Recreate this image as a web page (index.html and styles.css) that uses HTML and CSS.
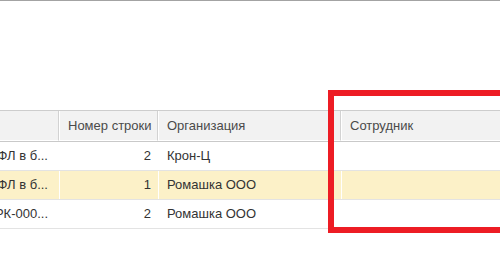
FILE: index.html
```html
<!DOCTYPE html>
<html lang="ru">
<head>
<meta charset="utf-8">
<title>Табличная часть</title>
<link rel="stylesheet" href="styles.css">
</head>
<body>
<div class="page">
  <div class="form-top"></div>
  <div class="grid">
    <div class="row head">
      <div class="cell"></div>
      <div class="cell">Номер строки</div>
      <div class="cell">Организация</div>
      <div class="cell">Сотрудник</div>
    </div>
    <div class="row">
      <div class="cell text-end">Удержание НДФЛ в б...</div>
      <div class="cell num">2</div>
      <div class="cell">Крон-Ц</div>
      <div class="cell"></div>
    </div>
    <div class="row current">
      <div class="cell text-end">Удержание НДФЛ в б...</div>
      <div class="cell num">1</div>
      <div class="cell">Ромашка ООО</div>
      <div class="cell"></div>
    </div>
    <div class="row">
      <div class="cell text-end">Документ РК-000...</div>
      <div class="cell num">2</div>
      <div class="cell">Ромашка ООО</div>
      <div class="cell"></div>
    </div>
  </div>
  <div class="highlight"></div>
</div>
</body>
</html>
```
FILE: styles.css
```css
* {
  box-sizing: border-box;
}

html, body {
  margin: 0;
  padding: 0;
  background: #fff;
}

body {
  width: 500px;
  height: 266px;
  overflow: hidden;
  font-family: "Liberation Sans", Arial, sans-serif;
  font-size: 13px;
  color: #333;
}

.page {
  position: relative;
  height: 266px;
  border-top: 1px solid #a3a3a3;
}

.form-top {
  height: 109px;
}

.grid {
  margin-left: -141px;
  width: 700px;
  border-top: 1px solid #cdcdcd;
}

.row {
  display: grid;
  grid-template-columns: 200px 99px 183px 1fr;
  height: 29px;
  border-bottom: 1px solid #e3e3e3;
}

.row.head {
  height: 31px;
  background: #f2f2f2;
  color: #4a4a4a;
  border-bottom: 1px solid #c9c9c9;
}

.row.head .cell {
  border-right: 1px solid #d2d2d2;
  border-bottom: 1px solid #fff;
  line-height: 29px;
}

.row.current {
  background: #fcf1c8;
}

.cell {
  border-left: 1px solid #fff;
  padding: 0 8px;
  line-height: 28px;
  white-space: nowrap;
  overflow: hidden;
}

.cell.num,
.cell.text-end {
  text-align: right;
  padding-right: 7px;
}

.cell.text-end {
  padding-right: 11px;
}

.highlight {
  position: absolute;
  left: 328px;
  top: 89px;
  width: 200px;
  height: 143px;
  border: 6px solid #ed1c24;
  pointer-events: none;
}
```
